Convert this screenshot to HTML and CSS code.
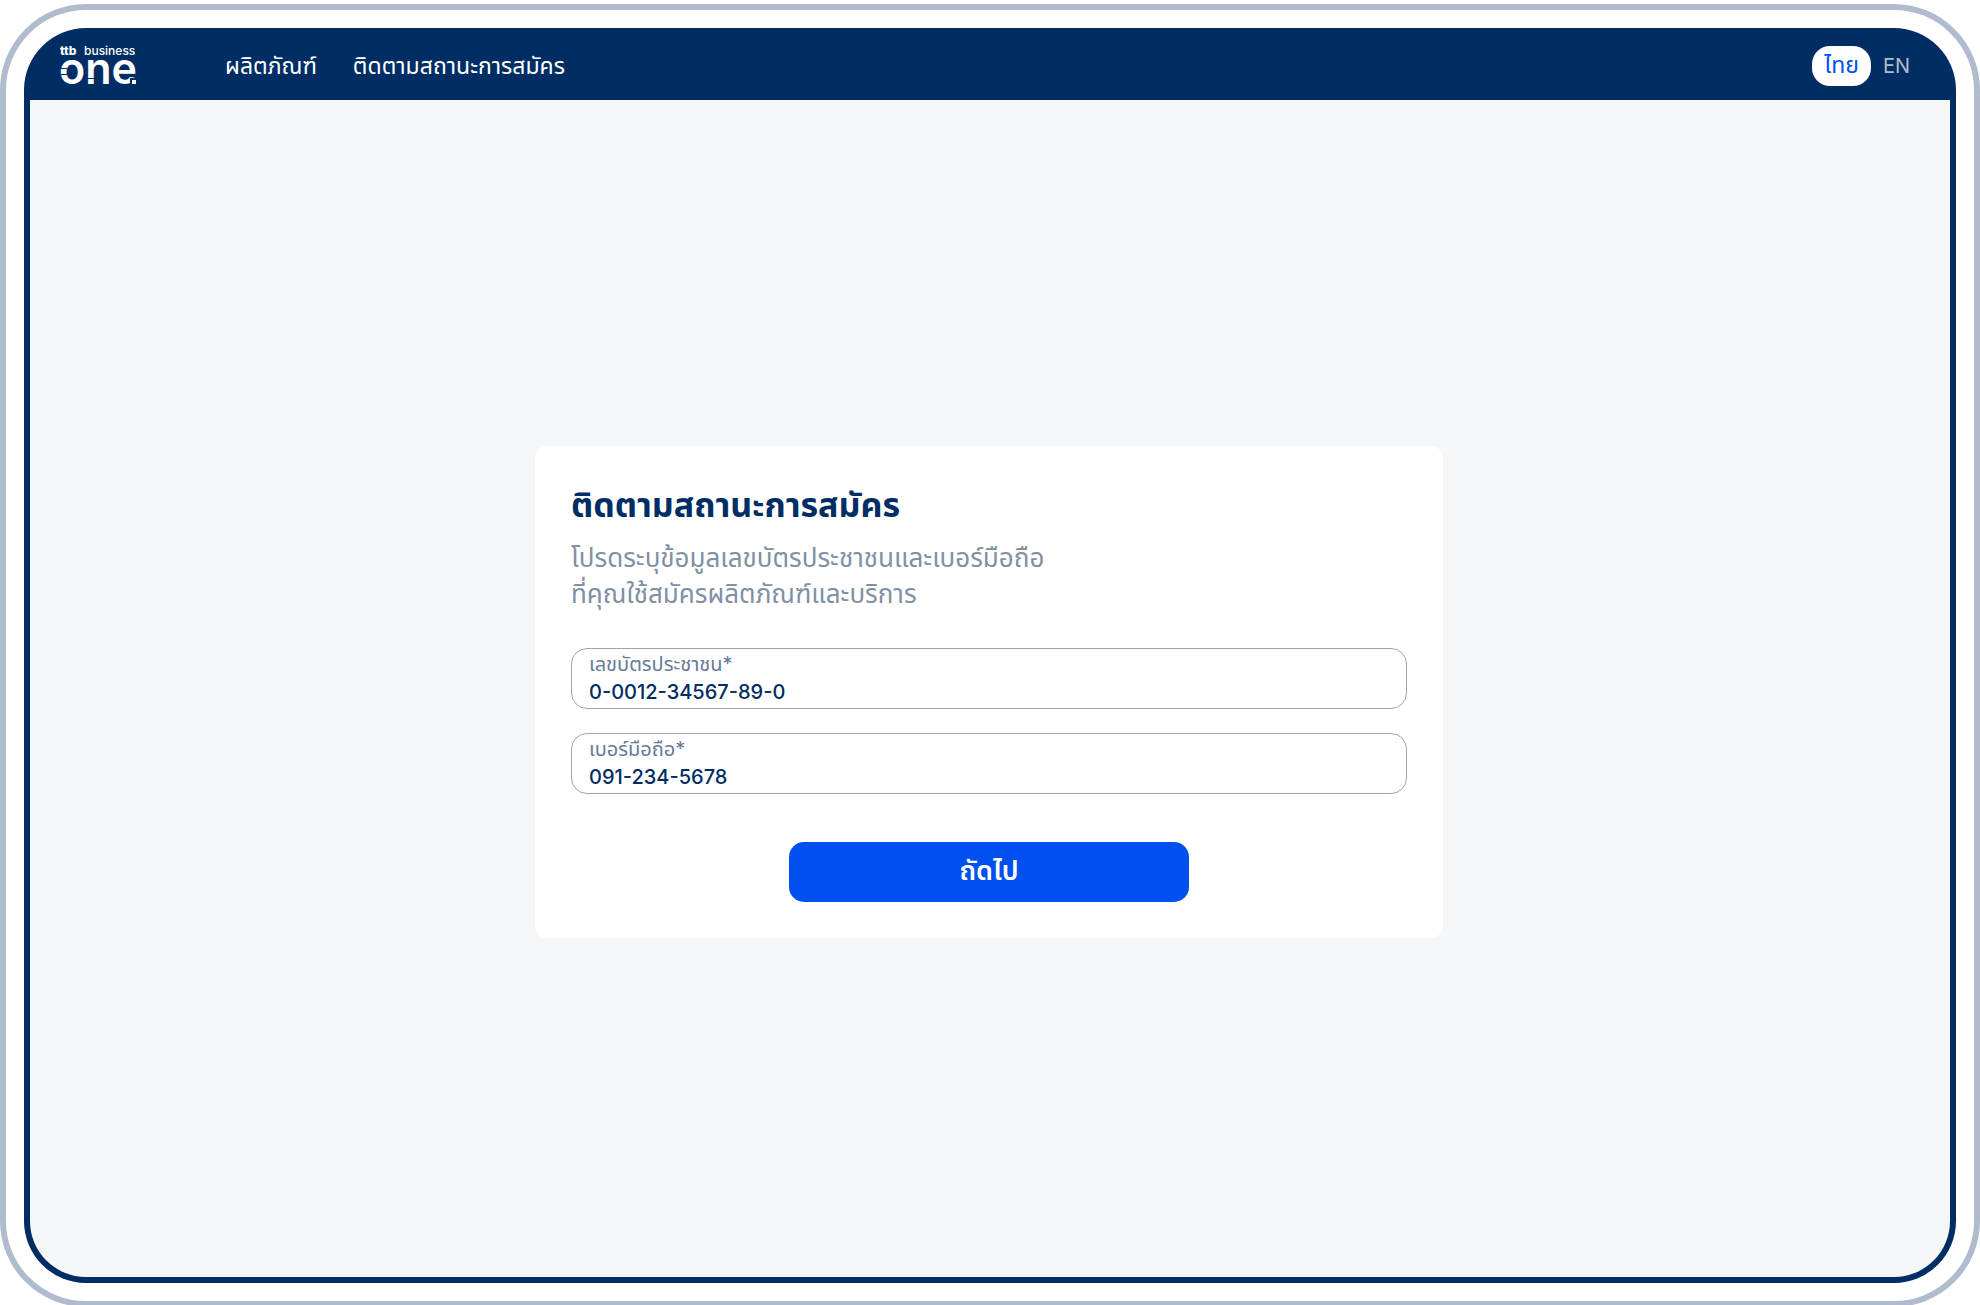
FILE: index.html
```
<!DOCTYPE html>
<html lang="th">
<head>
    <meta charset="UTF-8">
    <meta name="viewport" content="width=device-width, initial-scale=1.0">
    <title>ttb business one</title>
    <link rel="stylesheet" href="styles.css">
</head>
<body>
    <div class="device">
        <div class="screen">
            <header class="header">
                <a href="#" class="logo" aria-label="ttb business one">
                    <svg width="80" height="58" viewBox="0 0 80 58">
                        <text class="logo-ttb" x="0" y="18">ttb</text>
                        <text class="logo-business" x="24" y="18">business</text>
                        <text class="logo-one" x="-1" y="47">one</text>
                        <g class="logo-cut">
                            <rect x="0" y="31" width="7" height="1"/>
                            <rect x="0" y="37" width="7" height="1"/>
                            <rect x="26" y="41" width="9" height="1"/>
                            <rect x="70" y="41" width="10" height="9"/>
                        </g>
                        <rect class="logo-dot" x="72" y="43" width="4" height="4"/>
                    </svg>
                </a>
                <nav class="nav">
                    <a href="#">ผลิตภัณฑ์</a>
                    <a href="#">ติดตามสถานะการสมัคร</a>
                </nav>
                <div class="language">
                    <button type="button" class="lang active">ไทย</button>
                    <button type="button" class="lang">EN</button>
                </div>
            </header>

            <main class="content">
                <form class="card">
                    <h1>ติดตามสถานะการสมัคร</h1>
                    <p class="description">โปรดระบุข้อมูลเลขบัตรประชาชนและเบอร์มือถือ<br>ที่คุณใช้สมัครผลิตภัณฑ์และบริการ</p>

                    <div class="fields">
                        <div class="field">
                            <label for="citizen-id">เลขบัตรประชาชน*</label>
                            <input type="text" id="citizen-id" value="0-0012-34567-89-0">
                        </div>
                        <div class="field">
                            <label for="mobile">เบอร์มือถือ*</label>
                            <input type="tel" id="mobile" value="091-234-5678">
                        </div>
                    </div>

                    <button type="button" class="btn">ถัดไป</button>
                </form>
            </main>
        </div>
    </div>
</body>
</html>
```

FILE: styles.css
```
/* Reset */
* {
    margin: 0;
    padding: 0;
    box-sizing: border-box;
    font-family: Inter, "Noto Sans Thai", "Noto Sans", sans-serif;
}

body {
    height: 100vh;
    padding-top: 4px;
    background-color: #ffffff;
    overflow: hidden;
}

/* Device frame */
.device {
    height: calc(100vh - 2px);
    padding: 18px;
    border: 6px solid #b0bccd;
    border-radius: 86px;
}

.screen {
    display: flex;
    flex-direction: column;
    height: 100%;
    padding: 6px;
    border-radius: 62px;
    background-color: #002d63;
}

/* Header */
.header {
    display: flex;
    align-items: center;
    height: 66px;
    padding: 0 28px 2px 30px;
    flex-shrink: 0;
}

.logo {
    display: flex;
    margin-right: 85px;
}

.logo svg text {
    fill: #ffffff;
}

.logo-ttb {
    font-size: 12px;
    font-weight: 800;
}

.logo-business {
    font-size: 12px;
    font-weight: 500;
}

.logo-one {
    font-size: 43px;
    font-weight: 600;
}

.logo .logo-cut {
    fill: #002d63;
}

.logo-dot {
    fill: #ffffff;
}

.nav {
    display: flex;
    gap: 36px;
}

.nav a {
    font-size: 23px;
    line-height: 30px;
    color: #ffffff;
    text-decoration: none;
}

.language {
    display: flex;
    align-items: center;
    margin-left: auto;
}

.lang {
    height: 40px;
    padding: 0 12px;
    border: none;
    border-radius: 18px;
    background: none;
    font-size: 20px;
    color: #b0bccd;
    cursor: pointer;
}

.lang.active {
    background-color: #ffffff;
    font-size: 23px;
    color: #0050f0;
}

/* Content */
.content {
    display: flex;
    flex: 1;
    align-items: center;
    justify-content: center;
    padding: 6px 2px 0 0;
    border-radius: 0 0 56px 56px;
    background-color: #f5f6f8;
}

.card {
    width: 100%;
    max-width: 908px;
    padding: 36px;
    border-radius: 12px;
    background-color: #ffffff;
}

.card h1 {
    margin-bottom: 12px;
    font-size: 34px;
    line-height: 46px;
    color: #002d63;
}

.description {
    margin-bottom: 36px;
    font-size: 26px;
    line-height: 36px;
    color: #8190a3;
}

.fields {
    display: flex;
    flex-direction: column;
    gap: 24px;
    margin-bottom: 48px;
}

.field {
    display: flex;
    flex-direction: column;
    height: 61px;
    padding: 1px 17px;
    border: 1px solid #97a6bc;
    border-radius: 16px;
}

.field label {
    font-size: 20px;
    line-height: 28px;
    color: #68799a;
}

.field input {
    width: 100%;
    border: none;
    outline: none;
    background: none;
    font-size: 20px;
    font-weight: 500;
    line-height: 28px;
    color: #002d63;
}

/* Button */
.btn {
    display: block;
    width: 400px;
    height: 60px;
    margin: 0 auto;
    border: none;
    border-radius: 15px;
    background-color: #0050f0;
    font-size: 27px;
    font-weight: 600;
    color: #ffffff;
    cursor: pointer;
}
```
